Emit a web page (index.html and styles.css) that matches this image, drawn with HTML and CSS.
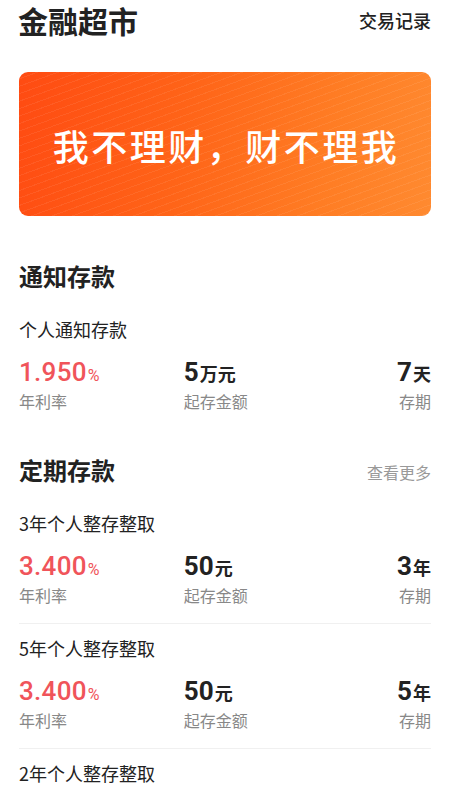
FILE: index.html
```html
<!DOCTYPE html>
<html lang="zh-CN">
<head>
<meta charset="utf-8">
<title>金融超市</title>
<link rel="stylesheet" href="styles.css">
</head>
<body>
<div class="page">
  <header class="topbar">
    <h1 class="title">金融超市</h1>
    <span class="records">交易记录</span>
  </header>

  <div class="banner">
    <span class="banner-text">我不理财，财不理我</span>
  </div>

  <section class="section section-notice">
    <div class="section-head">
      <h2 class="section-title">通知存款</h2>
    </div>
    <div class="item item-last">
      <div class="item-name">个人通知存款</div>
      <div class="stats">
        <div class="stat stat-rate">
          <div class="val rate">1.950<span class="pct">%</span></div>
          <div class="lbl">年利率</div>
        </div>
        <div class="stat stat-min">
          <div class="val">5<span class="unit">万元</span></div>
          <div class="lbl">起存金额</div>
        </div>
        <div class="stat stat-term">
          <div class="val">7<span class="unit">天</span></div>
          <div class="lbl">存期</div>
        </div>
      </div>
    </div>
  </section>

  <section class="section section-fixed">
    <div class="section-head">
      <h2 class="section-title">定期存款</h2>
      <span class="more">查看更多</span>
    </div>
    <div class="item">
      <div class="item-name">3年个人整存整取</div>
      <div class="stats">
        <div class="stat stat-rate">
          <div class="val rate">3.400<span class="pct">%</span></div>
          <div class="lbl">年利率</div>
        </div>
        <div class="stat stat-min">
          <div class="val">50<span class="unit">元</span></div>
          <div class="lbl">起存金额</div>
        </div>
        <div class="stat stat-term">
          <div class="val">3<span class="unit">年</span></div>
          <div class="lbl">存期</div>
        </div>
      </div>
    </div>
    <div class="item">
      <div class="item-name">5年个人整存整取</div>
      <div class="stats">
        <div class="stat stat-rate">
          <div class="val rate">3.400<span class="pct">%</span></div>
          <div class="lbl">年利率</div>
        </div>
        <div class="stat stat-min">
          <div class="val">50<span class="unit">元</span></div>
          <div class="lbl">起存金额</div>
        </div>
        <div class="stat stat-term">
          <div class="val">5<span class="unit">年</span></div>
          <div class="lbl">存期</div>
        </div>
      </div>
    </div>
    <div class="item item-last">
      <div class="item-name">2年个人整存整取</div>
    </div>
  </section>
</div>
</body>
</html>
```

FILE: styles.css
```css
* {
  box-sizing: border-box;
}

html, body {
  margin: 0;
  padding: 0;
  background: #ffffff;
}

body {
  font-family: "Noto Sans CJK SC", "Noto Sans", sans-serif;
  color: #222222;
}

.page {
  padding: 0 19px;
}

.topbar {
  display: flex;
  align-items: center;
  justify-content: space-between;
  height: 38px;
  padding-top: 1px;
}

.title {
  margin: 0;
  font-size: 30px;
  line-height: 36px;
  height: 36px;
  font-weight: 700;
  color: #222222;
  margin-left: -1px;
}

.records {
  font-size: 18px;
  line-height: 24px;
  font-weight: 500;
  color: #222222;
  margin-top: 1px;
}

.banner {
  margin-top: 34px;
  height: 144px;
  border-radius: 9px;
  background:
    repeating-linear-gradient(160deg, rgba(255,255,255,0) 0px, rgba(255,255,255,0) 6px, rgba(255,255,255,0.07) 6px, rgba(255,255,255,0.07) 7px),
    linear-gradient(100deg, #ff4b12 0%, #ff6418 40%, #ff7d24 75%, #ff8a30 100%);
  display: flex;
  align-items: center;
  justify-content: center;
  overflow: hidden;
}

.banner-text {
  color: #ffffff;
  font-size: 36px;
  line-height: 44px;
  font-weight: 500;
  letter-spacing: 2.5px;
  margin-left: 2px;
  margin-top: 2px;
}

.section-notice {
  margin-top: 44px;
}

.section-fixed {
  margin-top: 25px;
}

.section-head {
  display: flex;
  align-items: center;
  justify-content: space-between;
  height: 32px;
  margin-bottom: 13px;
}

.section-title {
  margin: 0;
  font-size: 24px;
  line-height: 32px;
  height: 32px;
  font-weight: 700;
  color: #222222;
}

.more {
  font-size: 16px;
  line-height: 22px;
  color: #999999;
  margin-top: 4px;
}

.item {
  padding: 12px 0 18px;
  border-bottom: 1px solid #f0f0f0;
}

.item-last {
  border-bottom: none;
}

.item-name {
  font-size: 18px;
  line-height: 24px;
  height: 24px;
  color: #222222;
}

.stats {
  display: flex;
  margin-top: 17px;
}

.stat-rate {
  width: 40%;
}

.stat-min {
  flex: 1;
}

.stat-term {
  text-align: right;
}

.val {
  display: flex;
  align-items: baseline;
  height: 28px;
  font-family: Roboto, "Noto Sans CJK SC", sans-serif;
  font-size: 26px;
  line-height: 28px;
  font-weight: 700;
  color: #222222;
  white-space: nowrap;
}

.stat-term .val {
  justify-content: flex-end;
}

.val.rate {
  color: #f0545a;
  font-weight: 500;
  letter-spacing: 0.3px;
}

.pct {
  font-size: 16px;
  line-height: 22px;
  font-weight: 400;
  letter-spacing: 0;
  margin-left: 1px;
}

.unit {
  font-family: "Noto Sans CJK SC", sans-serif;
  font-size: 18px;
  line-height: 24px;
  font-weight: 700;
  margin-left: 1px;
}

.lbl {
  margin-top: 5px;
  height: 20px;
  font-size: 16px;
  line-height: 20px;
  color: #888888;
}
```
